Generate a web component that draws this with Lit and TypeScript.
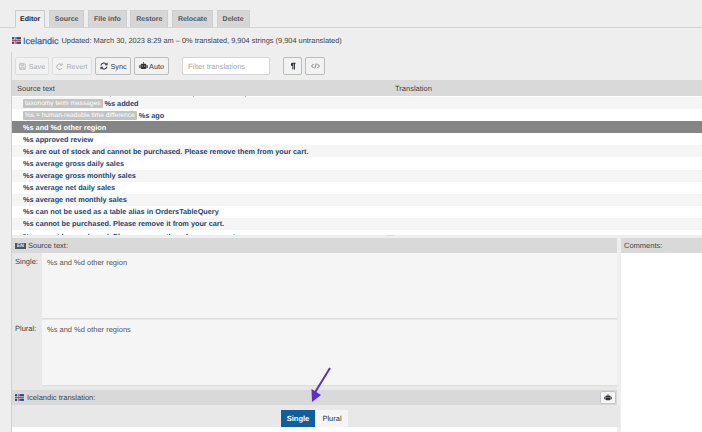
import { LitElement, html, css } from "lit";
import { customElement } from "lit/decorators.js";

const flag = html`<svg class="flag" viewBox="0 0 16 12" width="9" height="7"><rect width="16" height="12" fill="#1d4f8f"/><rect x="4" width="3.6" height="12" fill="#fff"/><rect y="4.2" width="16" height="3.6" fill="#fff"/><rect x="5" width="1.6" height="12" fill="#c33"/><rect y="5.2" width="16" height="1.6" fill="#c33"/></svg>`;
const robot = (w: number) => html`<svg viewBox="0 0 16 14" width=${w} height=${Math.round(w * 0.875)}><rect x="7.3" y="0" width="1.4" height="3" fill="#2c3338"/><rect x="3" y="3" width="10" height="9.5" rx="2" fill="#2c3338"/><rect x="0.5" y="5.5" width="2" height="5" fill="#2c3338"/><rect x="13.5" y="5.5" width="2" height="5" fill="#2c3338"/><circle cx="6" cy="7" r="1" fill="#eee"/><circle cx="10" cy="7" r="1" fill="#eee"/></svg>`;
const saveIcon = html`<svg viewBox="0 0 10 10" width="7" height="7" fill="none" stroke="#a7aaad" stroke-width="1"><path d="M1 1h6.5L9 2.5V9H1z"/><path d="M3 1v2.5h3.5V1M3 9V6h4v3"/></svg>`;
const revertIcon = html`<svg viewBox="0 0 10 10" width="7" height="7" fill="none" stroke="#a7aaad" stroke-width="1.2"><path d="M8.5 7.5A4 4 0 1 1 7.5 2"/><path d="M8.8 0.5V3.2H6" /></svg>`;
const syncIcon = html`<svg viewBox="0 0 10 10" width="8" height="8" fill="none" stroke="#2c3338" stroke-width="1.3"><path d="M1.2 4.2A3.8 3.8 0 0 1 8 2.8"/><path d="M8.8 5.8A3.8 3.8 0 0 1 2 7.2"/><path d="M8.8 .8V3.4H6.2M1.2 9.2V6.6H3.8"/></svg>`;
const paraIcon = html`<svg viewBox="0 0 8 10" width="6" height="8"><path d="M3.2 .5H7.4V2H6.6V9.5H5.3V2H4.5V9.5H3.2V5.4A2.5 2.5 0 0 1 3.2 .5Z" fill="#2c3338"/></svg>`;
const codeIcon = html`<svg viewBox="0 0 12 8" width="9" height="6" fill="none" stroke="#50575e" stroke-width="1"><path d="M3.5 1.2L.8 4l2.7 2.8M8.5 1.2L11.2 4 8.5 6.8M7 .8L5 7.2"/></svg>`;

const rows: [string, string, boolean][] = [
  ["taxonomy term messages", "%s added", false],
  ["%s = human-readable time difference", "%s ago", false],
  ["", "%s and %d other region", true],
  ["", "%s approved review", false],
  ["", "%s are out of stock and cannot be purchased. Please remove them from your cart.", false],
  ["", "%s average gross daily sales", false],
  ["", "%s average gross monthly sales", false],
  ["", "%s average net daily sales", false],
  ["", "%s average net monthly sales", false],
  ["", "%s can not be used as a table alias in OrdersTableQuery", false],
  ["", "%s cannot be purchased. Please remove it from your cart.", false],
  ["", "%s cannot be purchased. Please remove them from your cart.", false],
];

@customElement("app-root")
export class AppRoot extends LitElement {
  static styles = css`
    :host { display: block; width: 702px; height: 432px; overflow: hidden; position: relative; background: #eeeeee;
      font-family: "Liberation Sans", Arial, sans-serif; font-size: 8px; color: #444; text-rendering: geometricPrecision; }
    .tabs { display: flex; gap: 3.5px; height: 28px; padding: 10px 0 0 15px; box-sizing: border-box; border-bottom: 1px solid #d4d4d4; }
    .tab { height: 17px; box-sizing: border-box; display: flex; align-items: center; padding: 0 5px; background: #d6d6d6; border: 1px solid #cfcfcf; border-bottom: none; font-size: 7px; font-weight: 700; color: #50575e; }
    .tab.active { background: #eeeeee; color: #1d2327; height: 18px; padding: 0 4px; border-color: #ccc; border-bottom: 1px solid #eee; }
    .lang { height: 24px; display: flex; align-items: center; padding: 1px 0 0 12px; box-sizing: border-box; font-size: 7.4px; white-space: nowrap; color: #3c434a; }
    .lang .flag { margin-right: 2px; }
    .lang b { font-weight: 400; font-size: 9px; color: #1f66a8; margin-right: 3px; -webkit-text-stroke: .2px #1f66a8; }
    .panel { margin-left: 11px; border-left: 1px solid #d0d0d0; }
    .toolbar { height: 28px; background: #eeeeee; display: flex; align-items: center; padding-left: 3px; box-sizing: border-box; }
    .btn { height: 18px; box-sizing: border-box; display: flex; align-items: center; justify-content: center; gap: 3px; background: #f2f2f2; border: 1px solid #bcbcbc; border-radius: 2px; font-size: 7.2px; color: #2c3338; margin-right: 3px; }
    .btn.off { color: #a7aaad; border-color: #dedede; }
    .w34 { width: 34px; } .w40 { width: 40px; } .w36 { width: 36px; } .w35 { width: 35px; } .w19 { width: 19px; } .w20 { width: 20px; }
    .btn.auto { gap: 1px; }
    .filter { margin: 0 13px 0 10px; width: 88px; height: 18px; box-sizing: border-box; background: #fff; border: 1px solid #d5d5d5; border-radius: 2px; padding-left: 5px; font-size: 7.5px; color: #a7aaad; display: flex; align-items: center; }
    .head { height: 16px; background: #d9d9d9; display: flex; align-items: center; font-size: 7.5px; color: #444; padding-left: 5px; position: relative; }
    .head .col2 { position: absolute; left: 383px; }
    .tick { position: absolute; bottom: -1px; width: 1px; height: 1px; background: #bbb; }
    .t1 { left: 98px; } .t2 { left: 181px; } .t3 { left: 233px; }
    .list { height: 139px; overflow: hidden; background: #fff; padding-top: 1px; box-sizing: border-box; }
    .row { height: 12.1px; display: flex; align-items: center; padding-left: 11px; font-size: 7.3px; font-weight: 700; color: #23466f; white-space: nowrap; background: #fff; }
    .row:nth-child(odd) { background: #f5f5f5; }
    .row.sel { background: #858585; color: #fff; }
    .tag { background: #c3c3c3; color: #fff; font-weight: 400; font-size: 6.6px; padding: 1px 2px; margin-right: 2px; border-radius: 1px; }
    .grip { height: 3px; background: #eee; position: relative; }
    .grip i { position: absolute; left: 375px; top: 0; width: 7px; height: 1px; background: #dcdcdc; }
    .bottom { display: flex; height: 194px; gap: 1px; }
    .editor { width: 608px; flex: none; display: flex; flex-direction: column; }
    .bar { height: 15px; flex: none; background: #d9d9d9; display: flex; align-items: center; font-size: 7.5px; color: #444; margin-right: 3px; }
    .bar .en { background: #50575e; color: #eee; font-size: 5px; font-weight: 700; padding: 0 2px; margin: 0 2px 0 3px; }
    .bar .flag { margin: 0 3px 0 3px; }
    .bar .spacer { flex: 1; }
    .bar .robot { width: 16px; height: 13px; box-sizing: border-box; background: #f8f8f8; border: 1px solid #c3c4c7; border-radius: 2px; display: flex; align-items: center; justify-content: center; margin-right: 1px; }
    .fields { background: #e8e8e8; padding-bottom: 3px; margin-right: 3px; }
    .field { display: flex; height: 66px; flex: none; margin-bottom: 1px; background: #e8e8e8; }
    .field label { width: 30px; flex: none; padding: 4px 0 0 3px; box-sizing: border-box; font-size: 7.5px; color: #444; }
    .field div { flex: 1; background: #f5f5f5; padding: 5px 0 0 5px; font-size: 7.5px; color: #555; border-bottom: 1px solid #ddd; }
    .switch { height: 22px; flex: none; background: #e8e8e8; display: flex; justify-content: flex-start; padding: 5px 0 0 269px; box-sizing: border-box; }
    .switch span { display: flex; align-items: center; justify-content: center; font-size: 7.5px; height: 17px; }
    .single { width: 34px; background: #0f5f9e; color: #fff; font-weight: 700; font-size: 7px; }
    .plural { width: 32px; background: #f5f5f5; color: #333; margin-left: 1px; }
    .white { flex: 1; background: #fff; margin-right: 3px; }
    .comments { flex: 1; background: #fff; display: flex; flex-direction: column; }
    .comments .bar { padding-left: 3px; margin-right: 0; }
    .arrow { position: absolute; left: 305px; top: 362px; }
  `;

  render() {
    return html`
      <div class="tabs">
        ${["Editor", "Source", "File info", "Restore", "Relocate", "Delete"].map(
          (t, i) => html`<div class="tab ${i === 0 ? "active" : ""}">${t}</div>`
        )}
      </div>
      <div class="lang">${flag}<b>Icelandic</b> Updated: March 30, 2023 8:29 am – 0% translated, 9,904 strings (9,904 untranslated)</div>
      <div class="panel">
        <div class="toolbar">
          <div class="btn off w34">${saveIcon}Save</div>
          <div class="btn off w40">${revertIcon}Revert</div>
          <div class="btn w36">${syncIcon}Sync</div>
          <div class="btn auto w35">${robot(9)}Auto</div>
          <div class="filter">Filter translations</div>
          <div class="btn w19">${paraIcon}</div>
          <div class="btn w20">${codeIcon}</div>
        </div>
        <div class="head"><span>Source text</span><span class="col2">Translation</span><i class="tick t1"></i><i class="tick t2"></i><i class="tick t3"></i></div>
        <div class="list">
          ${rows.map(
            ([tag, text, sel]) => html`<div class="row ${sel ? "sel" : ""}">${tag ? html`<span class="tag">${tag}</span>` : ""}${text}</div>`
          )}
        </div>
        <div class="grip"><i></i></div>
        <div class="bottom">
          <div class="editor">
            <div class="bar"><span class="en">EN</span>Source text:</div>
            <div class="fields">
              <div class="field"><label>Single:</label><div>%s and %d other region</div></div>
              <div class="field"><label>Plural:</label><div>%s and %d other regions</div></div>
            </div>
            <div class="bar">${flag}Icelandic translation:<span class="spacer"></span><span class="robot">${robot(8)}</span></div>
            <div class="switch"><span class="single">Single</span><span class="plural">Plural</span></div>
            <div class="white"></div>
          </div>
          <div class="comments"><div class="bar">Comments:</div></div>
        </div>
      </div>
      <svg class="arrow" width="30" height="44" viewBox="0 0 30 44"><path d="M25 6 L9 32" stroke="#5b2fc0" stroke-width="2" fill="none"/><path d="M7 40 L6.5 27 L16 33 Z" fill="#5b2fc0"/></svg>
    `;
  }
}
